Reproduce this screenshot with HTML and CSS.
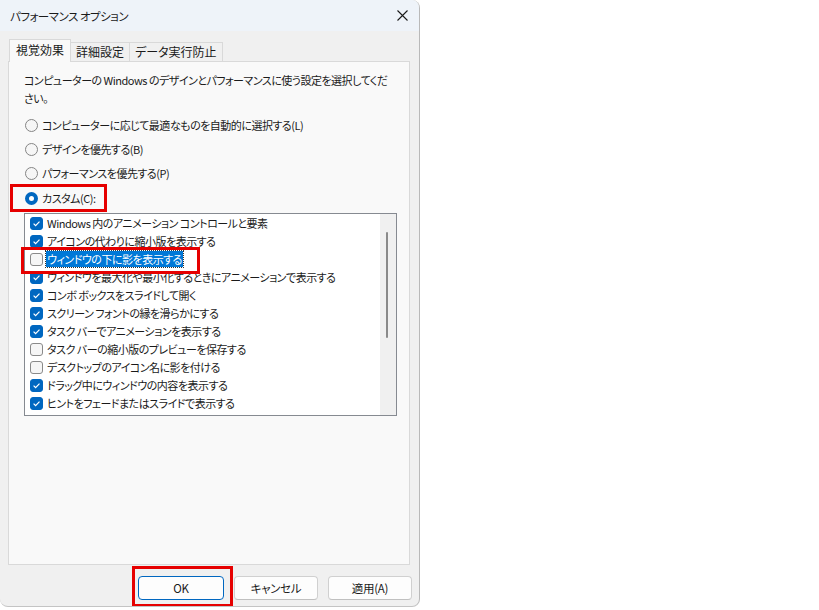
FILE: index.html
```html
<!DOCTYPE html>
<html lang="ja">
<head>
    <meta charset="UTF-8">
    <title>パフォーマンス オプション</title>
    <link rel="stylesheet" href="styles.css">
</head>
<body>
    <div class="dialog">
        <!-- タイトルバー -->
        <div class="titlebar">
            <span class="title">パフォーマンス オプション</span>
            <svg class="close" width="11" height="11" viewBox="0 0 11 11">
                <path d="M0.5 0.5 L10.5 10.5 M10.5 0.5 L0.5 10.5" stroke="#1a1a1a" stroke-width="1.1" fill="none"/>
            </svg>
        </div>

        <div class="body">
            <div class="tabs">
                <div class="tab active">視覚効果</div>
                <div class="tab">詳細設定</div>
                <div class="tab">データ実行防止</div>
            </div>

            <div class="panel">
                <p class="desc">コンピューターの Windows のデザインとパフォーマンスに使う設定を選択してくだ<br>さい。</p>

                <label class="radio-row"><span class="radio"></span>コンピューターに応じて最適なものを自動的に選択する(L)</label>
                <label class="radio-row"><span class="radio"></span>デザインを優先する(B)</label>
                <label class="radio-row"><span class="radio"></span>パフォーマンスを優先する(P)</label>
                <label class="radio-row"><span class="radio checked"></span>カスタム(C):</label>

                <div class="listbox">
                    <ul class="items">
                        <li><span class="check on"></span>Windows 内のアニメーション コントロールと要素</li>
                        <li><span class="check on"></span>アイコンの代わりに縮小版を表示する</li>
                        <li><span class="check"></span><span class="selected">ウィンドウの下に影を表示する</span></li>
                        <li><span class="check on"></span>ウィンドウを最大化や最小化するときにアニメーションで表示する</li>
                        <li><span class="check on"></span>コンボ ボックスをスライドして開く</li>
                        <li><span class="check on"></span>スクリーン フォントの縁を滑らかにする</li>
                        <li><span class="check on"></span>タスク バーでアニメーションを表示する</li>
                        <li><span class="check"></span>タスク バーの縮小版のプレビューを保存する</li>
                        <li><span class="check"></span>デスクトップのアイコン名に影を付ける</li>
                        <li><span class="check on"></span>ドラッグ中にウィンドウの内容を表示する</li>
                        <li><span class="check on"></span>ヒントをフェードまたはスライドで表示する</li>
                    </ul>
                    <div class="scrollbar"><div class="thumb"></div></div>
                </div>
            </div>

            <div class="buttons">
                <button class="btn default">OK</button>
                <button class="btn">キャンセル</button>
                <button class="btn">適用(A)</button>
            </div>
        </div>

        <!-- 赤枠の注記 -->
        <div class="mark mark-custom"></div>
        <div class="mark mark-shadow"></div>
        <div class="mark mark-ok"></div>
    </div>
</body>
</html>
```

FILE: styles.css
```css
body {
    margin: 0;
    background: #fff;
    font-family: "Noto Sans CJK JP", "Noto Sans", sans-serif;
    font-size: 11px;
    letter-spacing: -0.5px;
    font-feature-settings: "palt";
    color: #1a1a1a;
}
.dialog {
    position: relative;
    width: 420px;
    height: 607px;
    background: #f0f0f0;
    border-right: 1px solid #b9b9b9;
    border-bottom: 1px solid #c4c4c4;
    border-radius: 0 8px 8px 8px;
    box-sizing: border-box;
    overflow: hidden;
}
.titlebar {
    height: 31px;
    background: #eef3f9;
    display: flex;
    align-items: center;
    justify-content: space-between;
    padding: 0 11px 0 10px;
}
.title {
    font-size: 11.5px;
}
.body {
    padding: 8px 9px 0 8px;
}
/* タブ */
.tabs {
    display: flex;
    align-items: flex-end;
    height: 22px;
    padding-left: 1px;
    font-size: 12px;
    letter-spacing: 0;
}
.tab {
    height: 19px;
    line-height: 18px;
    padding: 0 5px;
    border: 1px solid #d9d9d9;
    border-bottom: none;
    border-left: none;
    background: #f0f0f0;
    box-sizing: border-box;
}
.tab.active {
    height: 23px;
    line-height: 20px;
    padding: 0 6px;
    border-left: 1px solid #d9d9d9;
    background: #f9f9f9;
    margin-bottom: -1px;
    position: relative;
}
.panel {
    height: 504px;
    box-sizing: border-box;
    background: #f9f9f9;
    border: 1px solid #d9d9d9;
    padding: 9px 12px 0 15px;
}
.desc {
    margin: 0 0 6px 0;
    line-height: 18px;
    white-space: nowrap;
}
.radio-row {
    display: flex;
    align-items: center;
    height: 24px;
}
.radio-row:last-of-type {
    height: 26px;
}
.radio {
    width: 11px;
    height: 11px;
    border: 1px solid #858585;
    border-radius: 50%;
    background: #f6f6f6;
    margin: 0 4px 0 1px;
    flex: none;
}
.radio.checked {
    width: 5px;
    height: 5px;
    border: 4px solid #0067c0;
    background: #fff;
}
/* リストボックス */
.listbox {
    margin-top: 2px;
    height: 203px;
    box-sizing: border-box;
    border: 1px solid #868a91;
    background: #fff;
    display: flex;
    overflow: hidden;
}
.items {
    list-style: none;
    margin: 0;
    padding: 0 0 0 5px;
    flex: 1;
    overflow: hidden;
}
.items li {
    display: flex;
    align-items: center;
    height: 18px;
    white-space: nowrap;
}
.check {
    width: 11px;
    height: 11px;
    border: 1px solid #8a8a8a;
    border-radius: 3px;
    background: #f6f6f6;
    margin-right: 4px;
    flex: none;
}
.check.on {
    border-color: #0067c0;
    background: #0067c0 url("data:image/svg+xml,%3Csvg xmlns='http://www.w3.org/2000/svg' width='11' height='11'%3E%3Cpath d='M2.6 5.6 L4.6 7.6 L8.5 3.6' stroke='white' stroke-width='1.2' fill='none'/%3E%3C/svg%3E") center no-repeat;
}
.selected {
    background: #0078d7;
    color: #fff;
    outline: 1px dotted #333;
    padding: 0 1px;
    margin-left: -1px;
    line-height: 16px;
}
.scrollbar {
    width: 16px;
    background: #f0f0f0;
    position: relative;
    flex: none;
}
.thumb {
    position: absolute;
    left: 6px;
    top: 18px;
    width: 2px;
    height: 106px;
    background: #8a8a8a;
    border-radius: 1px;
}
/* ボタン */
.buttons {
    display: flex;
    justify-content: flex-end;
    gap: 10px;
    margin: 11px -2px 0 0;
}
.btn {
    width: 84px;
    height: 24px;
    font-family: inherit;
    font-size: 11.5px;
    letter-spacing: -0.3px;
    font-feature-settings: "palt";
    color: #1a1a1a;
    background: #fdfdfd;
    border: 1px solid #d0d0d0;
    border-bottom-color: #c0c0c0;
    border-radius: 4px;
    padding: 0;
}
.btn.default {
    width: 86px;
    border: 1px solid #0067c0;
}
/* 赤枠 */
.mark {
    position: absolute;
    border: 3px solid #e60000;
    box-sizing: border-box;
}
.mark-custom {
    left: 10px;
    top: 184px;
    width: 97px;
    height: 28px;
}
.mark-shadow {
    left: 21px;
    top: 247px;
    width: 179px;
    height: 27px;
}
.mark-ok {
    left: 132px;
    top: 566px;
    width: 101px;
    height: 41px;
}
```
